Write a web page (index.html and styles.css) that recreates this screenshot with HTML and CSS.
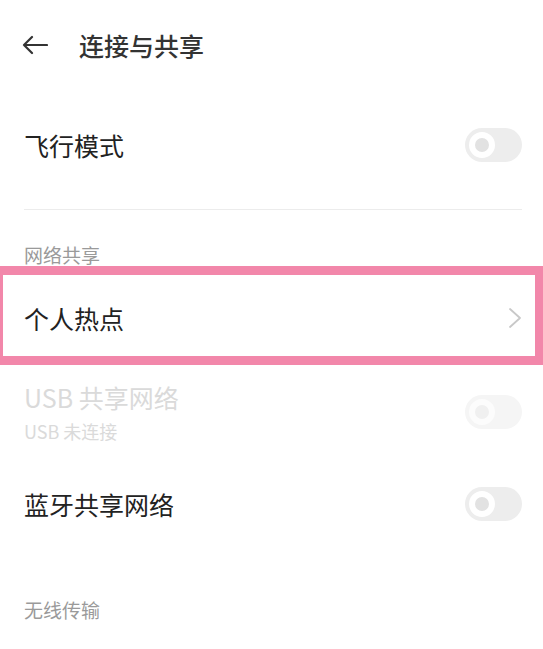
FILE: index.html
```html
<!DOCTYPE html>
<html lang="zh-CN">
<head>
    <meta charset="UTF-8">
    <title>连接与共享</title>
    <link rel="stylesheet" href="styles.css">
</head>
<body>
    <div class="header">
        <svg class="back" width="26" height="20" viewBox="0 0 26 20">
            <path d="M25 10H2M10 2L2 10l8 8" fill="none" stroke="#333" stroke-width="2.2" stroke-linecap="round" stroke-linejoin="round"/>
        </svg>
        <span class="title">连接与共享</span>
    </div>

    <div class="row airplane">
        <span class="label">飞行模式</span>
        <div class="switch"><div class="knob"></div></div>
    </div>
    <div class="divider"></div>

    <div class="section">网络共享</div>

    <div class="highlight">
        <div class="row link">
            <span class="label">个人热点</span>
            <svg class="chevron" width="14" height="22" viewBox="0 0 14 22">
                <path d="M2 2l10 9-10 9" fill="none" stroke="#c8c8c8" stroke-width="1.8" stroke-linecap="round" stroke-linejoin="round"/>
            </svg>
        </div>
    </div>

    <div class="row usb disabled">
        <div class="texts">
            <span class="label">USB 共享网络</span>
            <span class="sub">USB 未连接</span>
        </div>
        <div class="switch"><div class="knob"></div></div>
    </div>

    <div class="row bt">
        <span class="label">蓝牙共享网络</span>
        <div class="switch"><div class="knob"></div></div>
    </div>

    <div class="section last">无线传输</div>
</body>
</html>
```

FILE: styles.css
```css
body {
    margin: 0;
    background: #fff;
    font-family: "Noto Sans CJK SC", "Noto Sans", sans-serif;
    color: #222;
}
.header {
    height: 90px;
    display: flex;
    align-items: center;
    padding-left: 22px;
}
.back {
    margin-right: 31px;
}
.title {
    font-size: 25px;
    font-weight: 500;
    color: #333;
}
.row {
    display: flex;
    align-items: center;
    justify-content: space-between;
    padding: 0 21px 0 24px;
}
.label {
    font-size: 25px;
    line-height: 32px;
}
.airplane {
    height: 110px;
}
.divider {
    height: 1px;
    background: #ececec;
    margin: 9px 21px 0 24px;
}
.section {
    font-size: 19px;
    line-height: 22px;
    color: #9a9a9a;
    padding-left: 24px;
    margin-top: 34px;
}
.section.last {
    margin-top: 45px;
}
.highlight {
    border-style: solid;
    border-color: #f287aa;
    border-width: 9px 8px 9px 3px;
}
.link {
    height: 81px;
    padding: 4px 13px 0 21px;
    box-sizing: border-box;
}
.switch {
    width: 57px;
    height: 34px;
    border-radius: 17px;
    background: #ededed;
    display: flex;
    align-items: center;
    padding-left: 4px;
    box-sizing: border-box;
}
.knob {
    width: 14px;
    height: 14px;
    border-radius: 50%;
    border: 6px solid #fff;
    background: #e2e2e2;
}
.usb {
    padding-top: 16px;
    padding-bottom: 11px;
}
.texts {
    display: flex;
    flex-direction: column;
    gap: 6px;
}
.sub {
    font-size: 18px;
    line-height: 24px;
}
.disabled .label,
.disabled .sub {
    color: #dadada;
}
.disabled .switch {
    background: #f5f5f5;
}
.disabled .knob {
    border-color: #fcfcfc;
    background: #f0f0f0;
}
.bt {
    height: 100px;
}
```
